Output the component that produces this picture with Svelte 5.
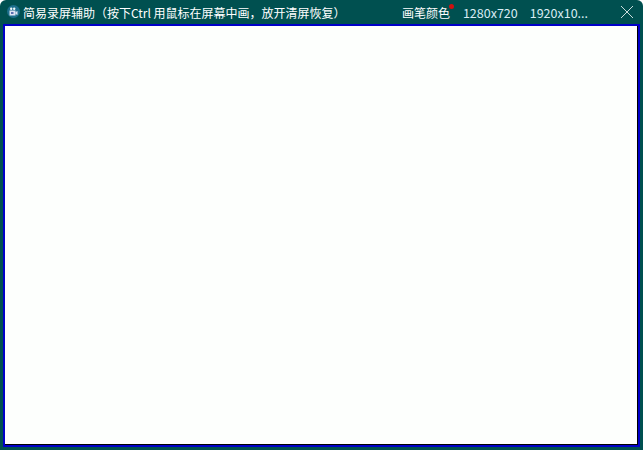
<script>
  const title = '简易录屏辅助（按下Ctrl 用鼠标在屏幕中画，放开清屏恢复）';
</script>

<div class="window">
  <header class="titlebar">
    <svg class="appicon" width="13" height="13" viewBox="0 0 13 13" aria-hidden="true">
      <circle cx="6.5" cy="6.5" r="6.5" fill="#1d6f8c" />
      <rect x="2.5" y="5.5" width="6" height="5" fill="#dfe3f4" />
      <rect x="4" y="7" width="2.5" height="2" fill="#5b6fb0" />
      <path d="M8.5 7 10.5 6V10L8.5 9Z" fill="#dfe3f4" />
      <circle cx="4.2" cy="3.8" r="1.2" fill="#f2fafd" />
      <circle cx="7.2" cy="3.8" r="1.2" fill="#f2fafd" />
    </svg>
    <span class="title">{title}</span>
    <nav class="actions">
      <span class="action color">画笔颜色<i class="dot"></i></span>
      <span class="action size">1280x720</span>
      <span class="action size">1920x10...</span>
    </nav>
    <svg class="close" width="14" height="14" viewBox="0 0 14 14" aria-hidden="true">
      <path d="M1 1 13 13M13 1 1 13" stroke="#c9dcdc" stroke-width="1" fill="none" />
    </svg>
  </header>
  <main class="canvas"></main>
</div>

<style>
  :global(body) {
    margin: 0;
    background: #fff;
  }
  .window {
    box-sizing: border-box;
    width: 643px;
    height: 450px;
    display: flex;
    flex-direction: column;
    background: #005050;
    padding: 0 3px 3px;
    border-radius: 6px 6px 0 0;
    font-family: "Noto Sans CJK SC", "Noto Sans", sans-serif;
  }
  .titlebar {
    height: 24px;
    flex: none;
    display: flex;
    align-items: center;
    color: #fff;
    font-size: 12px;
    padding-left: 4px;
  }
  .appicon {
    flex: none;
    margin-right: 3px;
    margin-bottom: 2px;
  }
  .title {
    white-space: nowrap;
  }
  .actions {
    margin-left: auto;
    display: flex;
    align-items: center;
    gap: 12px;
  }
  .action {
    white-space: nowrap;
  }
  .color {
    position: relative;
    margin-right: 1px;
  }
  .dot {
    position: absolute;
    right: -4px;
    top: 0;
    width: 5px;
    height: 5px;
    border-radius: 50%;
    background: #d01010;
  }
  .size {
    color: #d8ecf4;
    font-size: 12.5px;
  }
  .close {
    flex: none;
    margin-left: 32px;
    margin-right: 6px;
  }
  .canvas {
    flex: 1;
    background: #fdfffd;
    border: 2px solid #0000c8;
    box-shadow: inset -1px -1px 0 #000;
  }
</style>
